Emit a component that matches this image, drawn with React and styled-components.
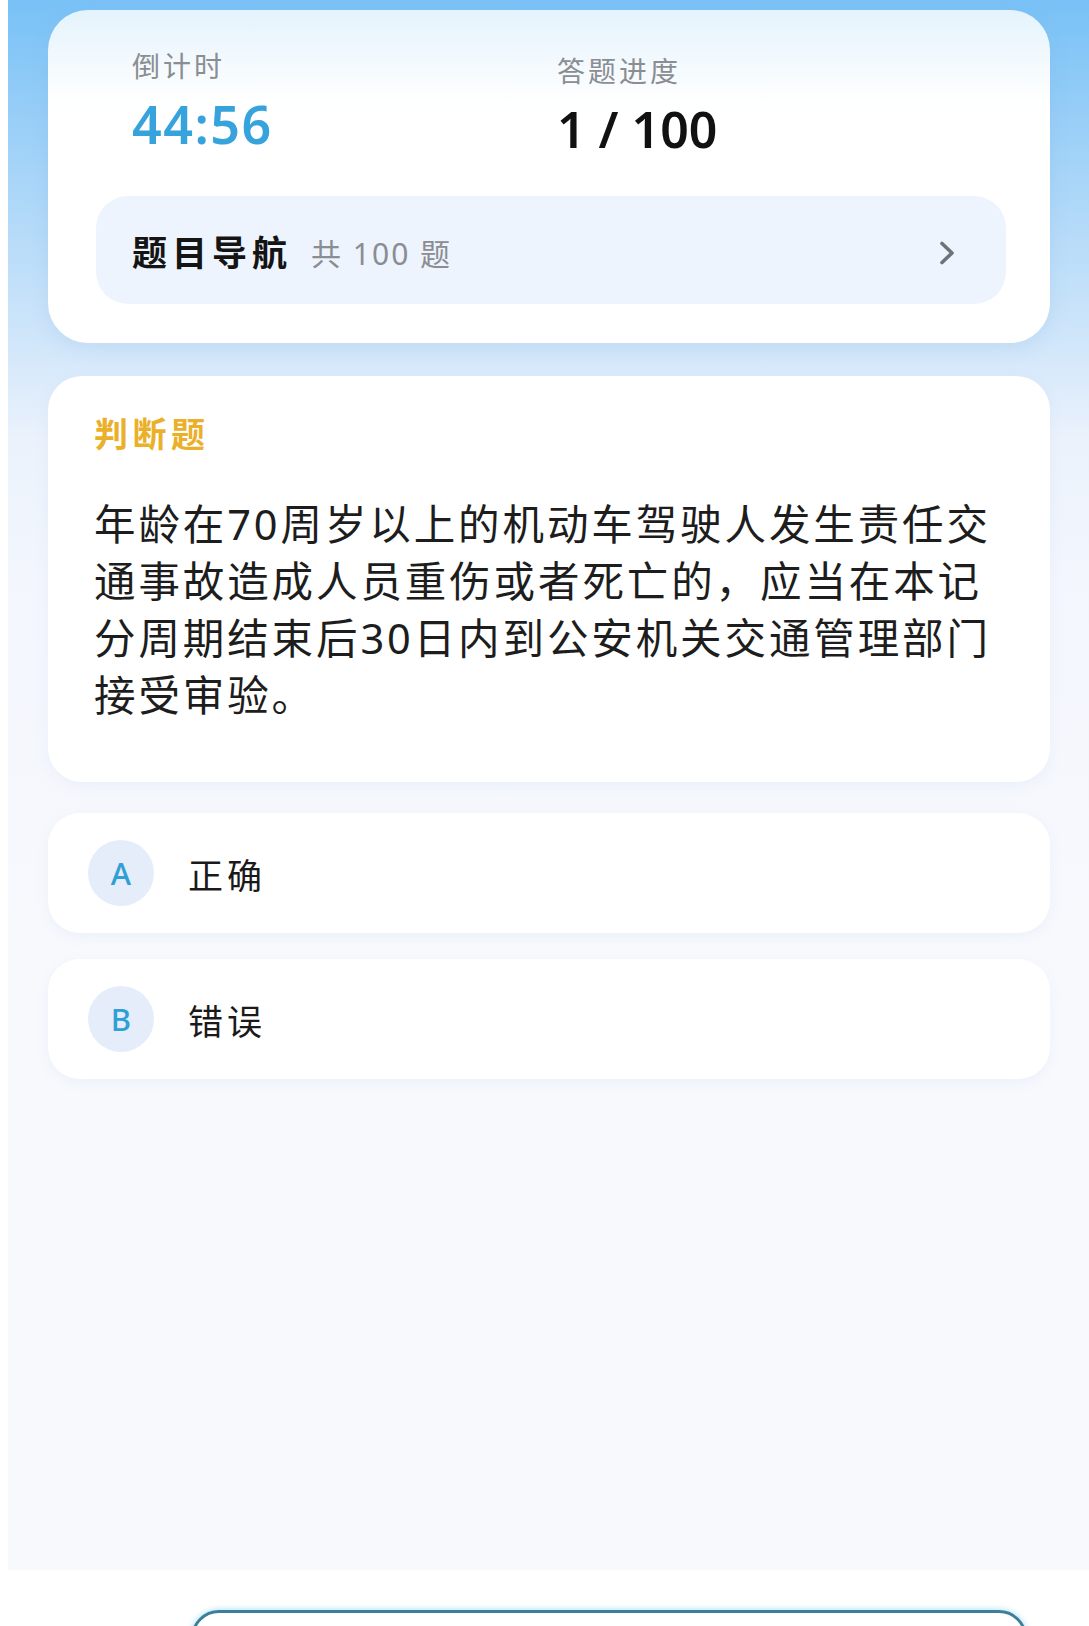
import React from 'react'
import styled, { createGlobalStyle } from 'styled-components'

const GlobalStyle = createGlobalStyle`
  html, body {
    margin: 0;
    padding: 0;
    background: #ffffff;
  }
  body {
    font-family: "Noto Sans", "Noto Sans CJK SC", sans-serif;
    -webkit-font-smoothing: antialiased;
  }
`

const options = [
    { key: 'A', text: '正确' },
    { key: 'B', text: '错误' },
]

function ChevronRight() {
    return (
        <svg width="22" height="28" viewBox="0 0 22 28" fill="none">
            <path d="M6 4.5 L16 14 L6 23.5" stroke="#6f7378" strokeWidth="3.6" strokeLinecap="round" strokeLinejoin="round" />
        </svg>
    )
}

function App() {
    return (
        <Page>
            <GlobalStyle />
            <Screen>
                <StatusCard>
                    <Stats>
                        <Stat>
                            <StatLabel>倒计时</StatLabel>
                            <StatValue accent>44:56</StatValue>
                        </Stat>
                        <Stat offset>
                            <StatLabel>答题进度</StatLabel>
                            <StatValue>1 / 100</StatValue>
                        </Stat>
                    </Stats>
                    <NavBar>
                        <NavTitle>题目导航</NavTitle>
                        <NavCount>共 100 题</NavCount>
                        <NavArrow><ChevronRight /></NavArrow>
                    </NavBar>
                </StatusCard>

                <QuestionCard>
                    <QuestionType>判断题</QuestionType>
                    <QuestionText>
                        年龄在70周岁以上的机动车驾驶人发生责任交通事故造成人员重伤或者死亡的，应当在本记分周期结束后30日内到公安机关交通管理部门接受审验。
                    </QuestionText>
                </QuestionCard>

                <OptionList>
                    {options.map(o => (
                        <OptionRow key={o.key}>
                            <OptionBadge>{o.key}</OptionBadge>
                            <OptionText>{o.text}</OptionText>
                        </OptionRow>
                    ))}
                </OptionList>
            </Screen>
            <Footer>
                <SubmitButton />
            </Footer>
        </Page>
    )
}

export default App

const Page = styled.div`
    height: 1626px;
    overflow: hidden;
    background: #ffffff;
`

const Screen = styled.div`
    margin-left: 8px;
    height: 1570px;
    box-sizing: border-box;
    padding: 10px 39px 0 40px;
    background: linear-gradient(180deg, #78c1f6 0px, #a6d4f8 170px, #d0e6fa 340px, #ebf2fc 440px, #f3f6fd 580px, #f7f9fd 950px);
    display: flex;
    flex-direction: column;
`

const StatusCard = styled.div`
    background: linear-gradient(180deg, #e4f3fc 0px, #ffffff 95px);
    border-radius: 40px;
    padding: 38px 44px 39px 48px;
    box-shadow: 0 6px 18px rgba(120, 170, 220, 0.18);
    display: flex;
    flex-direction: column;
    gap: 38px;
`

const Stats = styled.div`
    display: grid;
    grid-template-columns: 425px 1fr;
    padding-left: 36px;
`

const Stat = styled.div`
    display: flex;
    flex-direction: column;
    gap: 10px;
    padding-top: ${p => (p.offset ? '5px' : '0')};
`

const StatLabel = styled.span`
    font-size: 28px;
    line-height: 37px;
    color: #8a8d92;
    letter-spacing: 3px;
`

const StatValue = styled.span`
    font-family: "Noto Sans", sans-serif;
    font-size: ${p => (p.accent ? '52px' : '50px')};
    line-height: 58px;
    font-weight: 600;
    letter-spacing: ${p => (p.accent ? '1.5px' : '0')};
    color: ${p => (p.accent ? '#36a3dc' : '#111111')};
`

const NavBar = styled.div`
    height: 108px;
    border-radius: 32px;
    background: #eef4fd;
    display: flex;
    align-items: center;
    padding: 0 48px 0 36px;
`

const NavTitle = styled.span`
    font-size: 35px;
    font-weight: 700;
    letter-spacing: 5px;
    color: #141414;
`

const NavCount = styled.span`
    margin-left: 19px;
    font-size: 30px;
    color: #8a8d92;
    letter-spacing: 2px;
    padding-top: 4px;
`

const NavArrow = styled.span`
    margin-left: auto;
    display: flex;
    align-items: center;
    padding-top: 6px;
`

const QuestionCard = styled.div`
    margin-top: 33px;
    background: #ffffff;
    border-radius: 34px;
    padding: 37px 46px 58px 46px;
    display: flex;
    flex-direction: column;
    gap: 41px;
    box-shadow: 0 4px 14px rgba(150, 180, 220, 0.10);
`

const QuestionType = styled.span`
    font-size: 34px;
    line-height: 42px;
    font-weight: 700;
    letter-spacing: 4.5px;
    color: #ebb02a;
`

const QuestionText = styled.p`
    margin: 0;
    font-size: 41.5px;
    line-height: 57px;
    letter-spacing: 2.9px;
    color: #1d1d1d;
`

const OptionList = styled.div`
    margin-top: 31px;
    display: flex;
    flex-direction: column;
    gap: 26px;
`

const OptionRow = styled.div`
    height: 120px;
    background: #ffffff;
    border-radius: 32px;
    display: flex;
    align-items: center;
    padding: 0 40px;
    gap: 34px;
    box-shadow: 0 4px 14px rgba(150, 180, 220, 0.10);
`

const OptionBadge = styled.span`
    width: 66px;
    height: 66px;
    border-radius: 50%;
    background: #e4edf9;
    color: #2f9fd6;
    font-family: "Noto Sans", sans-serif;
    font-size: 31px;
    font-weight: 500;
    display: flex;
    align-items: center;
    justify-content: center;
`

const OptionText = styled.span`
    font-size: 35px;
    letter-spacing: 4px;
    color: #1a1a1a;
`

const Footer = styled.div`
    padding: 40px 0 0 191px;
`

const SubmitButton = styled.div`
    width: 830px;
    height: 80px;
    border: 3px solid #3d7f98;
    border-radius: 28px;
    box-shadow: 0 0 6px rgba(90, 200, 240, 0.6);
`
